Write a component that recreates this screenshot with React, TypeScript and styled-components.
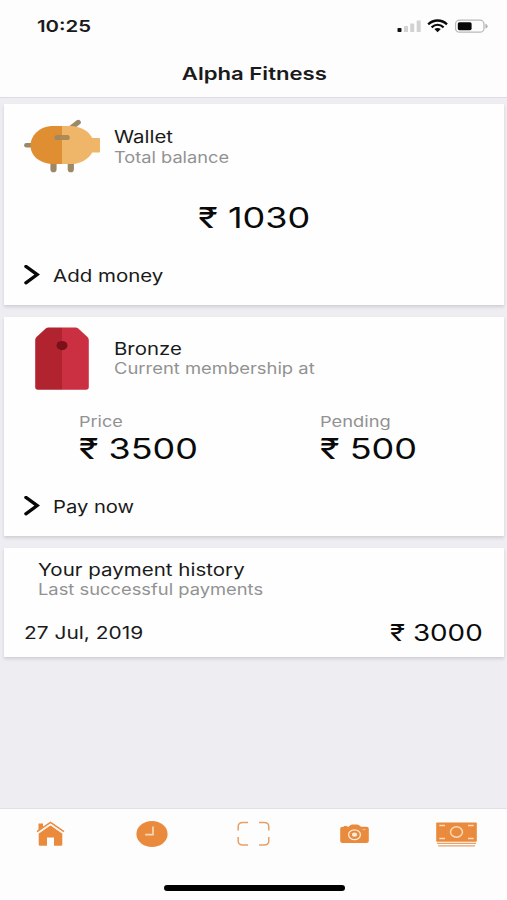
import React from "react";
import styled, { createGlobalStyle } from "styled-components";

const GlobalStyle = createGlobalStyle`
  * { box-sizing: border-box; }
  body { margin: 0; background: #eeedf2; }
  svg { display: block; }
`;

const Screen = styled.div`
  display: flex;
  flex-direction: column;
  width: 507px;
  height: 900px;
  overflow: hidden;
  background: #eeedf2;
  color: #1a1a1a;
  font-family: Inter, "Liberation Sans", sans-serif;
`;

const TopBar = styled.header`
  height: 98px;
  flex: none;
  background: #fdfdfd;
  border-bottom: 1px solid #dcdce0;
`;

const StatusBar = styled.div`
  display: flex;
  justify-content: space-between;
  height: 48px;
  padding: 16px 18px 0 37px;
`;

const StatusIcons = styled.div`
  display: flex;
  padding-top: 3px;
`;

/* Type is set on an expanded width. */
const Text = styled.div<{ $size: number; $wide: number; $origin?: string }>`
  width: max-content;
  white-space: nowrap;
  font-size: ${(p) => p.$size}px;
  line-height: ${(p) => (p.$size > 25 ? 34 : 20)}px;
  transform: scaleX(${(p) => p.$wide});
  transform-origin: ${(p) => p.$origin ?? "left"} center;
`;

const Strong = styled(Text)`
  font-weight: 600;
`;

const Muted = styled(Text)`
  color: #929292;
`;

const Amount = styled(Text)`
  color: #0a0a0a;
`;

const TitleRow = styled.div`
  display: flex;
  justify-content: center;
  padding: 16px 0 0 1px;
`;

const Content = styled.main`
  flex: 1;
  display: flex;
  flex-direction: column;
  gap: 12px;
  padding: 6px 3px 0 4px;
`;

const Card = styled.section<{ $height: number; $top: number }>`
  height: ${(p) => p.$height}px;
  padding: ${(p) => p.$top}px 21px 0 20px;
  background: #fefefe;
  box-shadow: 0 2px 3px rgba(50, 50, 70, 0.16);
`;

const CardHeader = styled.div<{ $height: number }>`
  display: grid;
  grid-template-columns: 76px 1fr;
  column-gap: 13.5px;
  align-items: center;
  height: ${(p) => p.$height}px;
`;

const HeaderText = styled.div`
  display: grid;
  grid-template-rows: 20px 20px;
  row-gap: 0.5px;
  padding-top: 1px;
`;

const Balance = styled.div`
  display: flex;
  justify-content: center;
  padding: 26px 0 0 1px;
`;

const Action = styled.div`
  display: flex;
  align-items: center;
  gap: 13px;
  margin-top: 31px;
  height: 20px;
`;

const Figures = styled.div`
  display: grid;
  grid-template-columns: 241px 1fr;
  padding: 21px 0 0 55px;
`;

const HistoryTitle = styled.div`
  padding-left: 14px;
`;

const HistoryRow = styled.div`
  display: flex;
  justify-content: space-between;
  margin-top: 23px;
`;

const TabBar = styled.nav`
  flex: none;
  height: 92px;
  display: flex;
  flex-direction: column;
  align-items: center;
  background: #fdfdfd;
  border-top: 1px solid #e1e1e5;
`;

const Tabs = styled.div`
  display: grid;
  grid-template-columns: repeat(5, 1fr);
  width: 100%;
  height: 50px;
`;

const Tab = styled.div`
  display: grid;
  place-items: center;
`;

const HomeIndicator = styled.div`
  width: 181px;
  height: 6px;
  margin: 26px 0 0 1px;
  border-radius: 3px;
  background: #000;
`;

const ORANGE = "#e98a3d";

const Signal = () => (
  <svg width="30" height="16" viewBox="0 0 30 16">
    <rect x="0.5" y="9" width="4" height="4" rx="0.8" fill="#111" />
    <rect x="7" y="7" width="4" height="6" rx="0.6" fill="#d2d2d2" />
    <rect x="13.2" y="4.5" width="4" height="8.5" rx="0.6" fill="#d2d2d2" />
    <rect x="19.7" y="1.5" width="4" height="11.5" rx="0.6" fill="#d2d2d2" />
  </svg>
);

const Wifi = () => (
  <svg width="28" height="16" viewBox="0 0 28 16" fill="none" stroke="#0a0a0a" strokeWidth="2.3">
    <path d="M1.2 5.3C6.6.2 14.6.2 20 5.3" />
    <path d="M4.6 8.3C8.2 5.1 13 5.1 16.6 8.3" />
    <path d="M7.4 10.1Q10.6 8.1 13.8 10.1L10.6 13.2Z" fill="#0a0a0a" stroke="none" />
  </svg>
);

const Battery = () => (
  <svg width="34" height="16" viewBox="0 0 34 16">
    <rect x="0.5" y="1.2" width="28.5" height="12" rx="4" fill="none" stroke="#b9b9b9" strokeWidth="1.3" />
    <rect x="2.8" y="3.2" width="13.8" height="8" rx="1.6" fill="#080808" />
    <path d="M30.4 4.8Q32.7 5.6 32.7 7.2T30.4 9.6Z" fill="#b3b3b3" />
  </svg>
);

const PiggyBank = () => (
  <svg width="76" height="56" viewBox="0 0 76 56">
    <g stroke="#9c8866" strokeLinecap="round" fill="none">
      <path d="M2.4 26.3H10" strokeWidth="4.6" />
      <path d="M47 9L54.3 3.3" strokeWidth="5" />
      <path d="M29.5 42V50.2M46.8 42V50.2" strokeWidth="6.2" />
    </g>
    <path d="M38 7H27C15 8 6.5 16.5 6.5 26.5S15 44 27 45H38Z" fill="#df8e32" />
    <path d="M38 7H48C58 8 65 12.5 68.3 19H75Q76 19 76 20V32.5Q76 33.5 75 33.5H68.3C64 40.5 57 44.5 48 45H38Z" fill="#efb569" />
    <path d="M33 18.6H43" stroke="#9c8866" strokeWidth="5" strokeLinecap="round" />
    <path d="M38 18.6H43" stroke="#b08a53" strokeWidth="5" strokeLinecap="round" />
  </svg>
);

const PriceTag = () => (
  <svg width="76" height="63" viewBox="0 0 76 63">
    <path d="M38 .4H24.5Q23 .4 22 1.3L12.5 9.9Q11.2 11.2 11.2 12.9V60Q11.2 62.7 14 62.7H38Z" fill="#b0232f" />
    <path d="M38 .4H51.5Q53 .4 54 1.3L63.5 9.9Q64.8 11.2 64.8 12.9V60Q64.8 62.7 62 62.7H38Z" fill="#cb3042" />
    <ellipse cx="38" cy="18.6" rx="5.5" ry="4.6" fill="#7b1019" />
  </svg>
);

const Chevron = () => (
  <svg width="16" height="22" viewBox="0 0 16 22">
    <path d="M1.9 1.4L13.2 9.6L1.9 17.8" fill="none" stroke="#080808" strokeWidth="3.3" strokeLinecap="round" />
  </svg>
);

const HomeIcon = () => (
  <svg width="29" height="26" viewBox="0 0 29 26">
    <path d="M2.5 2.5H7V6L2.5 9.5Z" fill={ORANGE} />
    <path d="M14.5 4.3L26.3 12.5V23.5Q26.3 24.8 25 24.8H18V16.5H11V24.8H4Q2.7 24.8 2.7 23.5V12.5Z" fill={ORANGE} />
    <path d="M1 10.7L14.5 1.5L28 10.7" fill="none" stroke={ORANGE} strokeWidth="1.5" />
    <path d="M2 12.2L14.5 3.6L27 12.2" fill="none" stroke="#fdf3ea" strokeWidth="1.1" />
  </svg>
);

const ClockIcon = () => (
  <svg width="32" height="26" viewBox="0 0 32 26">
    <ellipse cx="16" cy="13" rx="15.6" ry="13" fill={ORANGE} />
    <path d="M17 5.5V13.7H9.2" fill="none" stroke="#fbd7b5" strokeWidth="1.7" />
  </svg>
);

const ScanIcon = () => (
  <svg width="33" height="26" viewBox="0 0 33 26">
    <path
      d="M11 1.5H6Q1.2 1.5 1.2 5.5V9.5M22 1.5H27Q31.8 1.5 31.8 5.5V9.5M11 24H6Q1.2 24 1.2 20V16M22 24H27Q31.8 24 31.8 20V16"
      fill="none"
      stroke="#e5a069"
      strokeWidth="1.5"
    />
  </svg>
);

const CameraIcon = () => (
  <svg width="29" height="20" viewBox="0 0 29 20">
    <path d="M2.5 2.8H4V1.9H7.2V2.8H8.5L10.5 .9Q11.2 .4 12.2 .4H17Q18 .4 18.7 .9L21 2.8H26.5Q28.8 2.8 28.8 4.8V17Q28.8 19 26.5 19H2.5Q.2 19 .2 17V4.8Q.2 2.8 2.5 2.8Z" fill={ORANGE} />
    <ellipse cx="14.5" cy="10.7" rx="5.9" ry="4.9" fill="none" stroke="#fdebdc" strokeWidth="1.3" />
    <ellipse cx="14.5" cy="10.7" rx="2.6" ry="2.1" fill="#fdebdc" />
    <rect x="22.5" y="4.9" width="3" height="1.2" fill="#f3b98a" />
  </svg>
);

const CashIcon = () => (
  <svg width="41" height="25" viewBox="0 0 41 25">
    <rect x="0.2" y="0.4" width="40.6" height="19.3" rx="0.7" fill={ORANGE} />
    <ellipse cx="20.5" cy="10" rx="6" ry="5.2" fill="none" stroke="#fbd9ba" strokeWidth="1.5" />
    <path d="M3.3 3.4H9M32 3.4H37.7M3.3 16.4H9M32 16.4H37.7" stroke="#fbdcc0" strokeWidth="1.5" />
    <path d="M1 21.3H40M2.2 23.9H39" stroke="#e8a06a" strokeWidth="1.2" />
  </svg>
);

const tabs = [HomeIcon, ClockIcon, ScanIcon, CameraIcon, CashIcon];

export default function App() {
  return (
    <Screen>
      <GlobalStyle />
      <TopBar>
        <StatusBar>
          <Strong $size={16.5} $wide={1.235}>10:25</Strong>
          <StatusIcons>
            <Signal />
            <Wifi />
            <Battery />
          </StatusIcons>
        </StatusBar>
        <TitleRow>
          <Strong $size={17.5} $wide={1.265} $origin="center">Alpha Fitness</Strong>
        </TitleRow>
      </TopBar>

      <Content>
        <Card $height={200.5} $top={15}>
          <CardHeader $height={56}>
            <PiggyBank />
            <HeaderText>
              <Text $size={17} $wide={1.2}>Wallet</Text>
              <Muted $size={15.5} $wide={1.175}>Total balance</Muted>
            </HeaderText>
          </CardHeader>
          <Balance>
            <Amount $size={28.5} $wide={1.265} $origin="center">₹ 1030</Amount>
          </Balance>
          <Action>
            <Chevron />
            <Text $size={17} $wide={1.205}>Add money</Text>
          </Action>
        </Card>

        <Card $height={219} $top={10}>
          <CardHeader $height={64}>
            <PriceTag />
            <HeaderText>
              <Text $size={17} $wide={1.2}>Bronze</Text>
              <Muted $size={15.5} $wide={1.187}>Current membership at</Muted>
            </HeaderText>
          </CardHeader>
          <Figures>
            <div>
              <Muted $size={15} $wide={1.2}>Price</Muted>
              <Amount $size={28.5} $wide={1.26}>₹ 3500</Amount>
            </div>
            <div>
              <Muted $size={15} $wide={1.22}>Pending</Muted>
              <Amount $size={28.5} $wide={1.265}>₹ 500</Amount>
            </div>
          </Figures>
          <Action>
            <Chevron />
            <Text $size={17} $wide={1.187}>Pay now</Text>
          </Action>
        </Card>

        <Card $height={109} $top={12}>
          <HistoryTitle>
            <Text $size={17} $wide={1.207}>Your payment history</Text>
            <Muted $size={15.5} $wide={1.183}>Last successful payments</Muted>
          </HistoryTitle>
          <HistoryRow>
            <Text $size={17} $wide={1.23}>27 Jul, 2019</Text>
            <Amount $size={23} $wide={1.208} $origin="right">₹ 3000</Amount>
          </HistoryRow>
        </Card>
      </Content>

      <TabBar>
        <Tabs>
          {tabs.map((Icon, i) => (
            <Tab key={i}>
              <Icon />
            </Tab>
          ))}
        </Tabs>
        <HomeIndicator />
      </TabBar>
    </Screen>
  );
}
